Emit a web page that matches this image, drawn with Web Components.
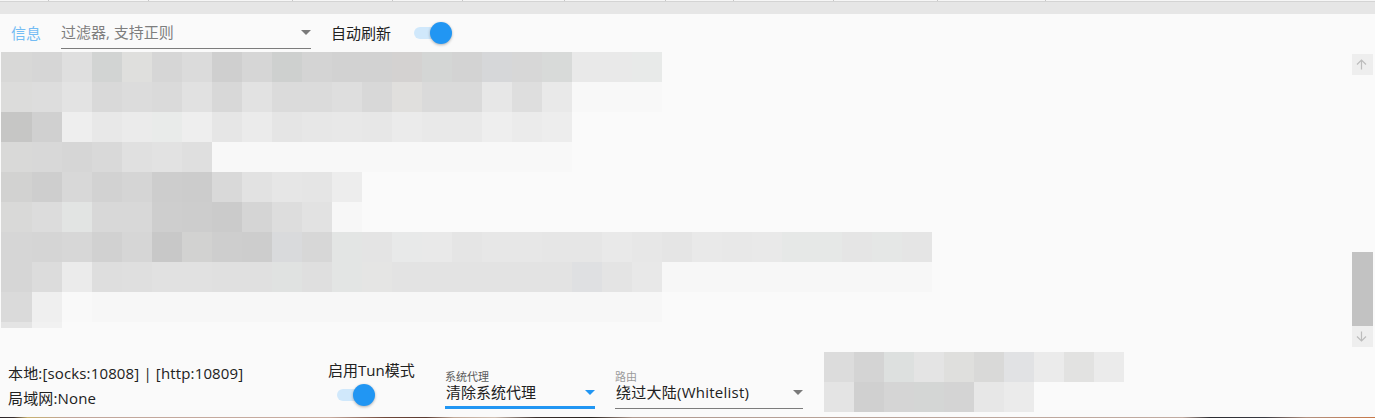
<!DOCTYPE html>
<html>
<head>
<meta charset="utf-8">
<style>
html, body { margin: 0; padding: 0; background: #fafafa; }
body { width: 1375px; height: 418px; overflow: hidden; font-family: "Open Sans", "Noto Sans CJK SC", sans-serif; font-size: 15px; color: #212121; }
</style>
</head>
<body>
<log-panel></log-panel>

<template id="panel-tpl">
  <style>
    :host { display: flex; flex-direction: column; width: 1375px; height: 418px; background: #fafafa; }
    .tabs { height: 1px; background: #f6f6f6; border-bottom: 1px solid #d4d4d4; flex: none; display: flex; }
    .tabs i { display: block; width: 1px; height: 1px; background: #c8c8c8; }
    .band { height: 12px; background: #e6e6e6; flex: none; }
    .filter { height: 38px; flex: none; display: flex; align-items: center; padding-left: 11px; }
    .filter .title { width: 50px; color: #74bcf4; line-height: 20px; }
    .filter .auto { margin-left: 20px; width: 82px; line-height: 20px; }
    .middle { height: 296px; flex: none; display: flex; justify-content: space-between; }
    .footer { height: 69px; flex: none; display: flex; }
    .status { width: 320px; padding: 13px 0 0 8px; box-sizing: border-box; line-height: 25px; letter-spacing: .15px; }
    .tun { width: 125px; display: flex; flex-direction: column; align-items: flex-start; padding: 13px 0 0 8px; box-sizing: border-box; }
    .tun span { line-height: 18px; margin-bottom: 4px; }
    .tun toggle-switch { margin-left: 8px; }
    .selects { display: flex; gap: 20px; padding-top: 22px; }
    .shade { margin-left: 21px; padding-top: 4px; }
    .edge { height: 1px; flex: none; background: linear-gradient(90deg, #2a2428 0, #3a3030 1%, #c8b070 2%, #c0a59a 5%, #c8aca0 24%, #70483a 28%, #5a3a30 31%, #c0a898 33%, #d0c0b4 36%, #3a302c 39%, #2a2420 43%, #b09a90 46%, #bca69c 70%, #c0aaa0 86%, #2c2c30 88%, #3a3a40 92%, #b09080 95%, #c87848 100%); }
  </style>
  <div class="tabs">
    <i style="margin-left:48px"></i><i style="margin-left:99px"></i><i style="margin-left:143px"></i><i style="margin-left:99px"></i><i style="margin-left:69px"></i>
    <i style="margin-left:101px"></i><i style="margin-left:100px"></i><i style="margin-left:67px"></i><i style="margin-left:99px"></i><i style="margin-left:103px"></i><i style="margin-left:107px"></i>
  </div>
  <div class="band"></div>
  <div class="filter">
    <span class="title">信息</span>
    <combo-box style="width:250px;height:31px;margin-top:1px" placeholder-text="过滤器, 支持正则"></combo-box>
    <span class="auto">自动刷新</span>
    <toggle-switch></toggle-switch>
  </div>
  <div class="middle">
    <mosaic-block id="log"></mosaic-block>
    <scroll-bar></scroll-bar>
  </div>
  <div class="footer">
    <div class="status">本地:[socks:10808] | [http:10809]<br>局域网:None</div>
    <div class="tun"><span>启用Tun模式</span><toggle-switch></toggle-switch></div>
    <div class="selects">
      <combo-box style="width:150px;height:39px" label="系统代理" value="清除系统代理" active></combo-box>
      <combo-box style="width:188px;height:39px;--ls:.25px" label="路由" value="绕过大陆(Whitelist)"></combo-box>
    </div>
    <div class="shade"><mosaic-block id="stats"></mosaic-block></div>
  </div>
  <div class="edge"></div>
</template>

<script>
class ToggleSwitch extends HTMLElement {
  constructor() {
    super();
    const shadow = this.attachShadow({mode: "open"});
    shadow.innerHTML = `
      <style>
        :host { display: block; width: 40px; height: 24px; position: relative; flex: none; }
        .track { position: absolute; left: 1px; top: 6px; width: 34px; height: 12px; border-radius: 6px; background: #d0e8fb; }
        .thumb { position: absolute; left: 17px; top: 1px; width: 22px; height: 22px; border-radius: 50%; background: #2196f3; box-shadow: 0 1px 3px rgba(0,0,0,.3); }
      </style>
      <div class="track"></div><div class="thumb"></div>`;
  }
}

class ComboBox extends HTMLElement {
  constructor() {
    super();
    this.attachShadow({mode: "open"});
  }
  connectedCallback() {
    const label = this.getAttribute("label");
    const value = this.getAttribute("value");
    const hint = this.getAttribute("placeholder-text");
    const on = this.hasAttribute("active");
    this.shadowRoot.innerHTML = `
      <style>
        :host { display: flex; flex-direction: column; flex: none; box-sizing: border-box; border-bottom: ${on ? "3px solid #2196f3" : "1px solid #7c7c7c"}; }
        .label { font-size: 11px; line-height: 13px; color: ${on ? "#5a5a5a" : "#9a9a9a"}; }
        .row { display: flex; align-items: center; justify-content: space-between; height: 20px; line-height: 20px; margin-top: ${label ? -1 : 4}px; }
        .text { color: #212121; padding-left: 1px; letter-spacing: var(--ls, 0); }
        .hint { color: #7e7e7e; }
        .arrow { width: 0; height: 0; border-left: 5px solid transparent; border-right: 5px solid transparent;
                 border-top: 5px solid ${on ? "#2196f3" : "#7a7a7a"}; }
      </style>
      ${label ? `<div class="label">${label}</div>` : ""}
      <div class="row">
        ${hint ? `<span class="hint">${hint}</span>` : `<span class="text">${value}</span>`}
        <div class="arrow"></div>
      </div>`;
  }
}

class ScrollBar extends HTMLElement {
  constructor() {
    super();
    const shadow = this.attachShadow({mode: "open"});
    shadow.innerHTML = `
      <style>
        :host { display: flex; flex-direction: column; width: 21px; margin-right: 2px; padding-top: 2px; flex: none; }
        .btn { height: 21px; background: #eeeeee; display: flex; align-items: center; justify-content: center; padding-right: 2px; box-sizing: border-box; flex: none; }
        .btn svg { display: block; }
        .gap { height: 177px; flex: none; }
        .thumb { height: 74px; background: #c2c2c2; flex: none; }
      </style>
      <div class="btn"><svg width="11" height="11" viewBox="0 0 11 11" fill="none" stroke="#bcbcbc" stroke-width="1.2"><path d="M5.5 10.5V1M1 5.5L5.5 1L10 5.5"/></svg></div>
      <div class="gap"></div>
      <div class="thumb"></div>
      <div class="btn"><svg width="11" height="11" viewBox="0 0 11 11" fill="none" stroke="#bcbcbc" stroke-width="1.2"><path d="M5.5 .5V10M1 5.5L5.5 10L10 5.5"/></svg></div>`;
  }
}

// blurred-out content: rows of 30px cells
class MosaicBlock extends HTMLElement {
  constructor() {
    super();
    this.attachShadow({mode: "open"});
  }
  set rows(data) {
    let html = `<style>
      :host { display: block; flex: none; }
      .row { display: flex; }
      .row div { width: 30px; flex: none; }
    </style>`;
    for (const r of data) {
      html += `<div class="row" style="height:${r.h || 30}px;margin-left:${r.x || 0}px">`;
      r.c.forEach((c, i) => {
        const w = i === 0 && r.w ? `width:${r.w}px;` : "";
        html += `<div style="${w}background:#${c}"></div>`;
      });
      html += `</div>`;
    }
    this.shadowRoot.innerHTML = html;
  }
}

class LogPanel extends HTMLElement {
  constructor() {
    super();
    const shadow = this.attachShadow({mode: "open"});
    shadow.append(document.getElementById("panel-tpl").content.cloneNode(true));
    const rep = (c, n) => Array(n).fill(c);
    const first = {x: 1, w: 31};
    shadow.getElementById("log").rows = [
      {...first, c: ["d8d8d7","d6d6d6","dfdfdf","d2d4d3","dfdfdd","d6d6d6","dbdbdb","cfcfcf","d6d6d6","ced0cf","d4d4d4","d2d2d2","d2d2d2","d4d2d1","d4d6d5","d3d3d3","d6d7d9","d7d7d7","d8dad9",...rep("e9e9e9",2),"e8eae9"]},
      {...first, c: ["dcdcdb","dddddd","e3e3e3","d9d9d9","dcdcdc","dadada","e1e1e1","d8d8d8","e2e2e2","dbdbdb","dbdbdb","dedede","d8d8d8","e0dfdd","dadada","dadada","e7e7e7","dedede","e9e9e9",...rep("f8f8f8",3)]},
      {...first, c: ["c6c6c5","d0d0d0","eeeeee","e8e8e8","ebebeb","e9ebea","eeeeee","e6e6e6","ebebeb","e5e5e5","e7e7e7","e8e8e8","e7e7e7","ebebeb","e9e9e9","e9e9e9","eeeeee","ebebeb","ededed"]},
      {...first, c: ["d9d9d8","d8d8d8","d6d6d6","d9d9d9","e0e0e0","e2e2e2","dfdfdf",...rep("f8f8f8",12)]},
      {...first, c: ["d2d2d1","cecece","d8d8d8","d2d2d2","d5d5d5","cdcdcd","cccccc","d9d9d9","e2e2e2","e6e6e6","e5e5e5","ededed"]},
      {...first, c: ["d9d9d8","dcdcdc","e2e4e3","d8d8d8","d8d8d8","cecece","cdcdcd","cbcbcb","d5d5d5","dddddd","e2e2e2","f7f7f7"]},
      {...first, c: ["d6d6d6","d5d5d5","d7d7d7","d1d1d1","d6d6d6","c8c8c8","d2d2d1","cecece","cdcdcd","d9dadc","d7d7d7","e3e5e4","e4e4e4","e8e9e9","e9e9e9","e5e5e5","e7e7e7","e7e7e7","e6e6e6","e6e6e6","e9e9e9","e7e7e7","e5e5e5","e9e9e9","e8e8e8","e9e9e9","e6e8e7","e6e8e7","e5e5e5","e5e7e6","e5e5e5"]},
      {...first, c: ["d6d6d6","dcdcdc","ebebeb","dedede","dfdfdf","e1e1e1","e1e1e1","e0e0e0","e0e0e0","e0e2e1","dfdfdf","e3e5e4","e5e5e4",...rep("e3e3e3",6),"dfe0e2","e4e4e4","e8e8e8",...rep("f7f7f7",9)]},
      {...first, c: ["dadada","efefef","f9f9f9",...rep("f7f7f7",19)]},
      {...first, h: 6, c: ["e4e4e4","f1f1f1"]}
    ];
    shadow.getElementById("stats").rows = [
      {c: ["dcdcdc","d4d4d4","dde0df","e4e4e4","dfdfdd","d9d9d8","e1e2e4","ebebeb","e2e2e1","ebebeb"]},
      {c: ["e4e4e4","d0d0d0","d5d5d5","d4d6d5","d4d4d4","e7e7e7","ebebeb"]}
    ];
  }
}

customElements.define("toggle-switch", ToggleSwitch);
customElements.define("combo-box", ComboBox);
customElements.define("scroll-bar", ScrollBar);
customElements.define("mosaic-block", MosaicBlock);
customElements.define("log-panel", LogPanel);
</script>
</body>
</html>
